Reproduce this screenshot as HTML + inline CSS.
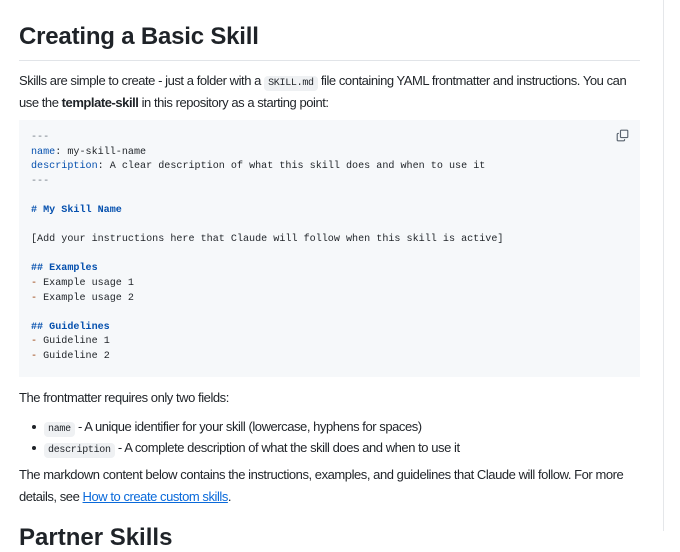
<!DOCTYPE html>
<html><head><meta charset="utf-8"><style>
body{margin:0;width:680px;height:531px;overflow:hidden;background:#fff;font-family:"Liberation Sans",sans-serif;color:#1f2328;font-size:13px;}
.rail{position:absolute;left:663px;top:0;width:1px;height:531px;background:#e5e7ea;}
.c{position:absolute;left:19px;top:0;width:621px;}
h1{font-size:24px;font-weight:bold;margin:0;position:absolute;top:23px;left:0;letter-spacing:-0.2px;}
.hr{position:absolute;top:60px;left:0;width:621px;height:1px;background:#e1e4e8;}
p{margin:0;line-height:21.5px;position:absolute;left:0;width:624px;letter-spacing:-0.45px;}
code{font-family:"Liberation Mono",monospace;font-size:10px;line-height:1;letter-spacing:-0.3px;background:#eff1f3;padding:2px 4px;border-radius:4px;}
pre{position:absolute;left:0;top:120px;width:621px;height:257px;margin:0;background:#f6f8fa;box-sizing:border-box;padding:11px 12px;font-family:"Liberation Mono",monospace;font-size:10.1px;line-height:14.6px;color:#1f2328;}
.k{color:#0550ae}.b{color:#0550ae;font-weight:bold}.d{color:#953800}.g{color:#6e7781}
ul{margin:0;padding:0;list-style:none;position:absolute;left:0;top:416px;letter-spacing:-0.45px;}
li{line-height:21px;height:21px;position:relative;padding-left:25px;}
li:before{content:"";position:absolute;left:13px;top:9px;width:4px;height:4px;border-radius:2px;background:#1f2328;}
a{color:#0969da;text-decoration:underline;}
h2{position:absolute;top:524px;left:0;margin:0;font-size:24px;font-weight:bold;}
</style></head><body>
<div class="rail"></div>
<div class="c">
<h1>Creating a Basic Skill</h1>
<div class="hr"></div>
<p style="top:70px">Skills are simple to create - just a folder with a <code>SKILL.md</code> file containing YAML frontmatter and instructions. You can use the <b>template-skill</b> in this repository as a starting point:</p>
<pre><span class="g">---</span>
<span class="k">name</span>: my-skill-name
<span class="k">description</span>: A clear description of what this skill does and when to use it
<span class="g">---</span>

<span class="b"># My Skill Name</span>

[Add your instructions here that Claude will follow when this skill is active]

<span class="b">## Examples</span>
<span class="d">-</span> Example usage 1
<span class="d">-</span> Example usage 2

<span class="b">## Guidelines</span>
<span class="d">-</span> Guideline 1
<span class="d">-</span> Guideline 2</pre>
<svg style="position:absolute;left:597px;top:129px" width="13" height="13" viewBox="0 0 16 16" fill="none" stroke="#59636e" stroke-width="1.4"><rect x="5.5" y="1.5" width="9" height="9" rx="1"/><path d="M3.5 5.5H2.5a1 1 0 0 0-1 1v7a1 1 0 0 0 1 1h7a1 1 0 0 0 1-1v-1"/></svg>
<p style="top:387px">The frontmatter requires only two fields:</p>
<ul>
<li><code>name</code> - A unique identifier for your skill (lowercase, hyphens for spaces)</li>
<li><code>description</code> - A complete description of what the skill does and when to use it</li>
</ul>
<p style="top:464px">The markdown content below contains the instructions, examples, and guidelines that Claude will follow. For more details, see <a>How to create custom skills</a>.</p>
<h2>Partner Skills</h2>
</div>
</body></html>
